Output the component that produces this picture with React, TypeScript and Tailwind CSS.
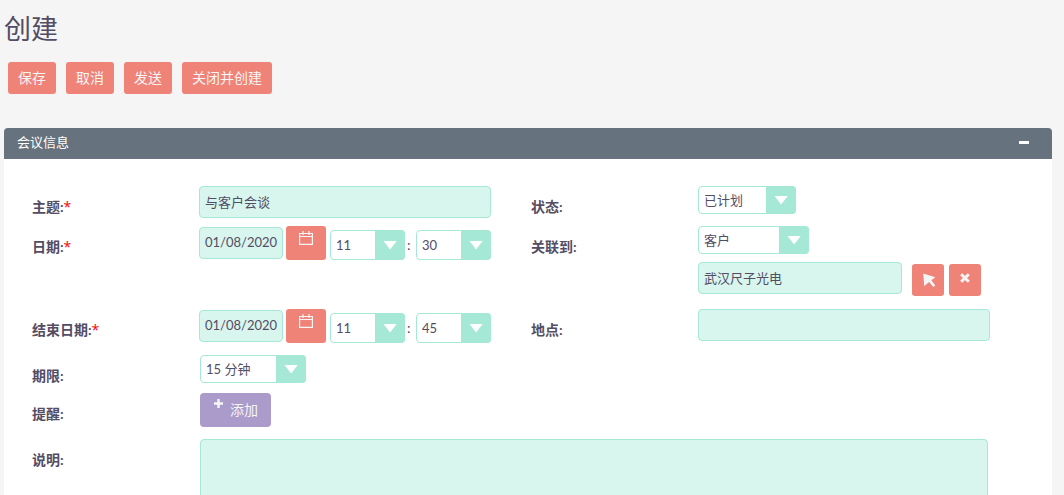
import React from 'react';

const field =
  'block h-8 rounded border border-[#a5e8d6] bg-[#d8f5ee] px-[5px] pb-0.5 text-[13px] text-[#534d64] outline-none focus:border-[#6fd3b8]';
const coral = 'cursor-pointer rounded-[3px] bg-[#f08377] text-[#f5f5f5] hover:bg-[#ed6c5f]';

function Action({ children }: { children: React.ReactNode }) {
  return (
    <button type="button" className={`${coral} h-8 px-2.5 text-sm`}>
      {children}
    </button>
  );
}

function Row({
  id,
  label,
  required,
  className = '',
  children,
}: {
  id: string;
  label: string;
  required?: boolean;
  className?: string;
  children: React.ReactNode;
}) {
  return (
    <div className={`flex items-start ${className}`}>
      <label htmlFor={id} className="w-[167px] shrink-0 pt-[11px] text-sm leading-5 font-bold">
        {label}
        {required && <span className="font-['Open_Sans'] font-normal text-[#ff0000]">*</span>}
      </label>
      <div className="min-w-0 grow">{children}</div>
    </div>
  );
}

function Select({
  id,
  options,
  value,
  name,
  className,
}: {
  id?: string;
  options: string[];
  value: string;
  name: string;
  className: string;
}) {
  return (
    <div className={`relative ${className}`}>
      <select
        id={id}
        aria-label={name}
        defaultValue={value}
        className="block h-full w-full appearance-none rounded border border-[#a5e8d6] bg-white pt-0.5 pr-8 pl-[5px] text-[13px] text-[#534d64] outline-none"
      >
        {options.map((o) => (
          <option key={o}>{o}</option>
        ))}
      </select>
      <span className="pointer-events-none absolute inset-y-0 right-0 flex w-[30px] items-center justify-center rounded-r bg-[#a5e8d6]">
        <svg width="14" height="9" viewBox="0 0 14 9" className="fill-white" aria-hidden="true">
          <path d="M0.5 0h13.2L7.1 8.6z" />
        </svg>
      </span>
    </div>
  );
}

function DateTime({ id, name, minute }: { id: string; name: string; minute: string }) {
  return (
    <div className="flex items-end">
      <input id={id} defaultValue="01/08/2020" className={`${field} mb-px w-[84px]`} />
      <button
        type="button"
        aria-label={`选择${name}`}
        className={`${coral} mr-1 ml-[3px] flex h-[34px] w-10 items-start justify-center pt-[5px]`}
      >
        <svg width="14" height="14" viewBox="0 0 14 14" fill="none" stroke="currentColor" strokeWidth="1.2" aria-hidden="true">
          <path d="M0.6 2.5h12.8v10.9H0.6zM0.6 5.5h12.8M4 0v4M10 0v4" />
        </svg>
      </button>
      <Select name={`${name}小时`} value="11" options={['09', '10', '11', '12']} className="h-[30px] w-[75px]" />
      <span className="w-[11px] pl-0.5 text-sm leading-[30px]">:</span>
      <Select name={`${name}分钟`} value={minute} options={['00', '15', '30', '45']} className="h-[30px] w-[75px]" />
    </div>
  );
}

export default function App() {
  return (
    <div className="min-h-screen bg-[#f5f5f5] pr-3 pl-1 font-['Lato','Noto_Sans_CJK_SC',sans-serif] text-[#534d64]">
      <h1 className="pt-[11px] pb-px text-[27px] leading-9">创建</h1>
      <div className="mt-3.5 ml-1 flex gap-2.5">
        <Action>保存</Action>
        <Action>取消</Action>
        <Action>发送</Action>
        <Action>关闭并创建</Action>
      </div>

      <section className="mt-[34px]">
        <header className="flex h-[31px] items-center justify-between rounded-t bg-[#66727d] pr-[23px] pb-1 pl-[13px] text-white">
          <h2 className="text-[13px] leading-5">会议信息</h2>
          <button type="button" aria-label="折叠" className="flex h-5 cursor-pointer items-center pt-0.5">
            <span className="h-[3px] w-[10px] bg-white" />
          </button>
        </header>

        <form className="bg-white pt-[27px] pr-[22px] pb-7 pl-7">
          <div className="grid grid-cols-2">
            <Row id="subject" label="主题:" required className="h-10">
              <input id="subject" defaultValue="与客户会谈" className={`${field} w-[292px]`} />
            </Row>
            <Row id="status" label="状态:" className="h-10">
              <Select id="status" name="状态" value="已计划" options={['已计划', '已举行', '未举行']} className="h-7 w-[98px]" />
            </Row>

            <Row id="start" label="日期:" required>
              <DateTime id="start" name="日期" minute="30" />
            </Row>
            <Row id="parent" label="关联到:" className="pb-[13px]">
              <Select name="关联类型" value="客户" options={['客户', '联系人', '商业机会']} className="h-7 w-[111px]" />
              <div className="mt-2 flex">
                <input id="parent" defaultValue="武汉尺子光电" className={`${field} w-[204px]`} />
                <button
                  type="button"
                  aria-label="选择"
                  className={`${coral} mt-0.5 ml-2.5 flex size-8 items-center justify-center pl-[3px]`}
                >
                  <svg width="13" height="15" viewBox="0 0 13 15" fill="currentColor" aria-hidden="true">
                    <path d="M0.3 0.5L12.3 4.2 8.4 7.2l3.9 5.2-2 1.6-4.2-5-4.9 4z" />
                  </svg>
                </button>
                <button
                  type="button"
                  aria-label="清除"
                  className={`${coral} mt-0.5 ml-[5px] flex size-8 items-center justify-center pb-1`}
                >
                  <svg width="10" height="10" viewBox="0 0 10 10" stroke="currentColor" strokeWidth="3" aria-hidden="true">
                    <path d="M1.2 1.2l7.6 7.6M8.8 1.2L1.2 8.8" />
                  </svg>
                </button>
              </div>
            </Row>

            <Row id="end" label="结束日期:" required className="h-[46px]">
              <DateTime id="end" name="结束日期" minute="45" />
            </Row>
            <Row id="location" label="地点:" className="h-[46px]">
              <input id="location" className={`${field} w-[292px]`} />
            </Row>
          </div>

          <Row id="duration" label="期限:" className="h-[38px]">
            <Select
              id="duration"
              name="期限"
              value="15 分钟"
              options={['15 分钟', '30 分钟', '45 分钟']}
              className="ml-px h-7 w-[106px]"
            />
          </Row>
          <Row id="reminder" label="提醒:" className="h-[46px]">
            <button
              id="reminder"
              type="button"
              className="ml-px flex h-[34px] w-[71px] cursor-pointer items-start gap-[7px] rounded bg-[#aa9bca] pt-1.5 pl-3.5 text-sm text-[#f5f5f5] hover:bg-[#9a89bf]"
            >
              <svg width="9" height="9" viewBox="0 0 9 9" fill="currentColor" aria-hidden="true">
                <path d="M3.3 0h2.4v3.3H9v2.4H5.7V9H3.3V5.7H0V3.3h3.3z" />
              </svg>
              <span className="pt-px leading-5">添加</span>
            </button>
          </Row>
          <Row id="description" label="说明:">
            <div className="pr-[42px] pl-px">
              <textarea
                id="description"
                rows={6}
                className="block w-full resize-none rounded border border-[#a5e8d6] bg-[#d8f5ee] p-[5px] text-[13px] text-[#534d64] outline-none"
              />
            </div>
          </Row>
        </form>
      </section>
    </div>
  );
}
